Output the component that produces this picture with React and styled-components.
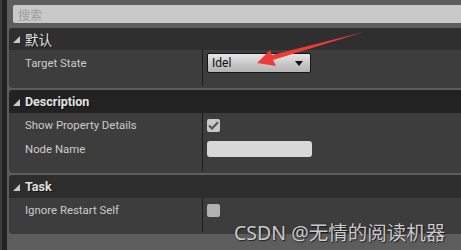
import styled, { createGlobalStyle } from "styled-components";

const GlobalStyle = createGlobalStyle`
  html, body {
    margin: 0;
    padding: 0;
    background: #5d5d5d;
  }
  body {
    font-family: Roboto, "Noto Sans CJK SC", sans-serif;
    width: 461px;
    height: 250px;
    overflow: hidden;
  }
`;

const Window = styled.div`
  position: relative;
  display: flex;
  width: 461px;
  height: 250px;
  background: #5d5d5d;
`;

const EdgeStrip = styled.div`
  width: 5px;
  flex: none;
  margin-left: 2px;
  background: #222222;
  box-shadow: -2px 0 0 #3c3c3c;
`;

const Panel = styled.div`
  flex: 1;
  display: flex;
  flex-direction: column;
  padding: 5px 0 0 2px;
`;

const Search = styled.div`
  height: 18px;
  margin: 0 0 5px 4px;
  background: #c9c9c9;
  border-radius: 2px 0 0 2px;
  display: flex;
  align-items: center;
  padding-left: 5px;
  font-family: "Noto Sans CJK SC", sans-serif;
  font-size: 12px;
  color: #9d9d9d;
`;

const Section = styled.div`
  display: flex;
  flex-direction: column;
  margin-bottom: 2px;
`;

const Header = styled.div`
  height: ${(p) => p.$h}px;
  background: ${(p) => p.$bg};
  border-radius: 3px 0 0 0;
  display: flex;
  align-items: center;
  gap: 5px;
  padding-left: 4px;
  font-family: ${(p) => (p.$cjk ? '"Noto Sans CJK SC", sans-serif' : "Roboto, sans-serif")};
  font-size: ${(p) => (p.$cjk ? 13.5 : 12.5)}px;
  font-weight: ${(p) => (p.$cjk ? 400 : 700)};
  color: #e2e2e2;
  text-shadow: 1px 1px 0 #111;
`;

const Body = styled.div`
  background: #3d3d3d;
  border-radius: 0 0 0 4px;
  padding-bottom: ${(p) => p.$pad}px;
  display: flex;
  flex-direction: column;
`;

const Row = styled.div`
  display: grid;
  grid-template-columns: 194px 1fr;
  height: ${(p) => p.$h}px;
`;

const Label = styled.div`
  display: flex;
  align-items: center;
  padding-left: 16px;
  font-size: 11.4px;
  color: #cbcbcb;
  border-right: 1px solid #1c1c1c;
  margin-bottom: ${(p) => (p.$last ? -10 : 0)}px;
  padding-bottom: ${(p) => (p.$last ? 10 : 0)}px;
  height: 100%;
`;

const Value = styled.div`
  display: flex;
  align-items: center;
  padding-left: 4px;
`;

const Combo = styled.div`
  width: 104px;
  height: 20px;
  box-sizing: border-box;
  border: 1px solid #151515;
  border-radius: 2px;
  background: linear-gradient(#e6e6e6, #c4c4c4 60%, #b4b4b4);
  display: flex;
  align-items: center;
  justify-content: space-between;
  padding: 0 7px 0 4px;
  font-size: 12px;
  color: #111;
`;

const ComboArrow = styled.span`
  width: 0;
  height: 0;
  border-left: 4px solid transparent;
  border-right: 4px solid transparent;
  border-top: 5px solid #111;
`;

const Check = styled.div`
  width: 13px;
  height: 13px;
  border-radius: 2px;
  background: ${(p) => (p.$on ? "#c9c9c9" : "#b1b1b1")};
  display: flex;
  align-items: center;
  justify-content: center;
`;

const TextField = styled.div`
  width: 105px;
  height: 16px;
  border-radius: 3px;
  background: #d8d8d8;
`;

const Tri = styled.span`
  width: 0;
  height: 0;
  border-left: 7px solid transparent;
  border-bottom: 7px solid #c8c8c8;
  margin-top: 1px;
`;

const Watermark = styled.div`
  position: absolute;
  left: 234px;
  top: 217px;
  font-family: "Noto Sans", "Noto Sans CJK SC", sans-serif;
  font-size: 19.5px;
  color: rgba(235, 235, 235, 0.85);
  text-shadow: 0 0 1px #222, 1px 1px 1px rgba(0, 0, 0, 0.6);
  white-space: nowrap;
`;

const ArrowOverlay = styled.svg`
  position: absolute;
  left: 0;
  top: 0;
  pointer-events: none;
`;

function CheckMark() {
  return (
    <svg width="11" height="9" viewBox="0 0 11 9">
      <path d="M1 4.5 L4 7.5 L10 1.2" fill="none" stroke="#555" strokeWidth="2.2" />
    </svg>
  );
}

export default function App() {
  return (
    <>
      <GlobalStyle />
      <Window>
        <EdgeStrip />
        <Panel>
          <Search>搜索</Search>

          <Section>
            <Header $h={22} $bg="#2f2f2f" $cjk>
              <Tri />
              默认
            </Header>
            <Body $pad={12}>
              <Row $h={26}>
                <Label $last>Target State</Label>
                <Value>
                  <Combo>
                    Idel
                    <ComboArrow />
                  </Combo>
                </Value>
              </Row>
            </Body>
          </Section>

          <Section>
            <Header $h={23} $bg="#222222">
              <Tri />
              Description
            </Header>
            <Body $pad={12}>
              <Row $h={24}>
                <Label>Show Property Details</Label>
                <Value>
                  <Check $on>
                    <CheckMark />
                  </Check>
                </Value>
              </Row>
              <Row $h={24}>
                <Label $last>Node Name</Label>
                <Value>
                  <TextField />
                </Value>
              </Row>
            </Body>
          </Section>

          <Section>
            <Header $h={23} $bg="#2d2d2d">
              <Tri />
              Task
            </Header>
            <Body $pad={12}>
              <Row $h={24}>
                <Label $last>Ignore Restart Self</Label>
                <Value>
                  <Check />
                </Value>
              </Row>
            </Body>
          </Section>
        </Panel>

        <ArrowOverlay width="461" height="250">
          <path
            d="M364 32 L272 55 L270 50 L257 63 L276 66 L273 60 Z"
            fill="#f03a3a"
          />
        </ArrowOverlay>
        <Watermark>CSDN @无情的阅读机器</Watermark>
      </Window>
    </>
  );
}
